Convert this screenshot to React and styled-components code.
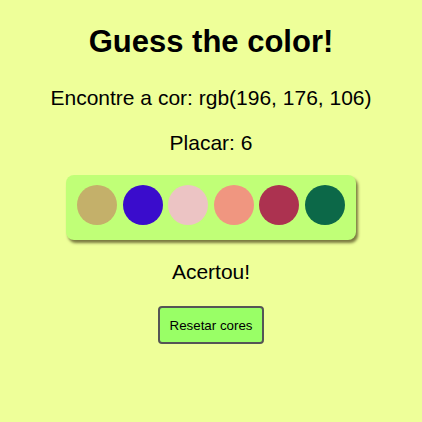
import React from 'react';
import styled, { createGlobalStyle } from 'styled-components';

const GlobalStyle = createGlobalStyle`
  body {
    margin: 0;
    background-color: #eeff99;
    font-family: "Liberation Sans", Arial, sans-serif;
  }
`;

const Page = styled.main`
  display: flex;
  flex-direction: column;
  align-items: center;
  text-align: center;
  padding-top: 24px;
`;

const Title = styled.h1`
  font-size: 31px;
  line-height: 36px;
  font-weight: bold;
  margin: 0 0 26px;
`;

const Text = styled.p`
  font-size: 21px;
  line-height: 24px;
  margin: ${(p) => p.$top || 0}px 0 ${(p) => p.$gap || 0}px;
`;

const Palette = styled.div`
  display: flex;
  gap: 5.6px;
  padding: 10px 11px 15px;
  background-color: #c0ff77;
  border-radius: 8px;
  box-shadow: 2px 3px 3px #7a7a40;
`;

const Ball = styled.div`
  width: 40px;
  height: 40px;
  border-radius: 50%;
  background-color: ${(p) => p.$color};
`;

const ResetButton = styled.button`
  font-family: "Liberation Sans", Arial, sans-serif;
  font-size: 13.33px;
  padding: 0 10px;
  height: 38px;
  background-color: #99ff66;
  border: 2px solid #555;
  border-radius: 4px;
  color: #000;
`;

const colors = [
  'rgb(196, 176, 106)',
  'rgb(58, 12, 204)',
  'rgb(236, 196, 196)',
  'rgb(240, 150, 128)',
  'rgb(172, 50, 80)',
  'rgb(12, 104, 72)',
];

const App = () => {
  return (
    <>
      <GlobalStyle />
      <Page>
        <Title>Guess the color!</Title>
        <Text $gap={21}>Encontre a cor: rgb(196, 176, 106)</Text>
        <Text $gap={20}>Placar: 6</Text>
        <Palette>
          {colors.map((c) => (
            <Ball key={c} $color={c} />
          ))}
        </Palette>
        <Text $top={20} $gap={22}>Acertou!</Text>
        <ResetButton>Resetar cores</ResetButton>
      </Page>
    </>
  );
};

export default App;
